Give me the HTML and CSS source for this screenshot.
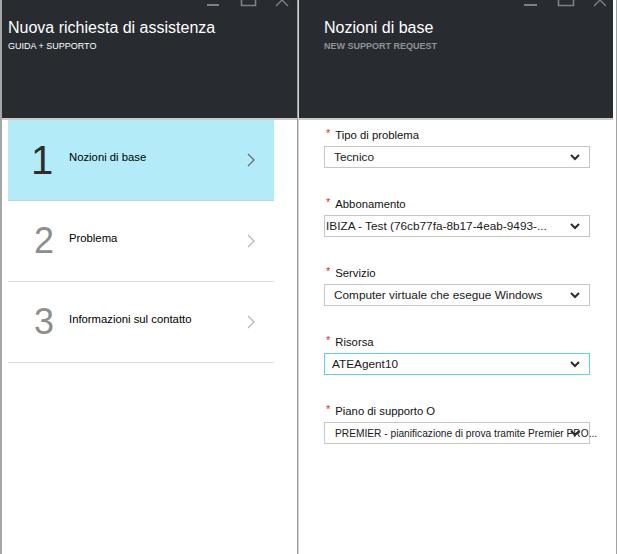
FILE: index.html
```html
<!DOCTYPE html>
<html lang="it">
<head>
<meta charset="utf-8">
<title>Nuova richiesta di assistenza</title>
<link rel="stylesheet" href="styles.css">
</head>
<body>
<div class="app">
  <section class="blade blade-left">
    <header class="blade-header">
      <svg class="win-controls" width="82" height="8" viewBox="0 0 82 8">
        <rect x="0" y="4" width="12" height="2" fill="#7d8187"/>
        <path d="M34.5 -10 V5.5 H48.5 V-10" fill="none" stroke="#7d8187" stroke-width="1.6"/>
        <path d="M69 -6 L81 6 M81 -6 L69 6" fill="none" stroke="#7d8187" stroke-width="1.4"/>
      </svg>
      <h1 class="blade-title">Nuova richiesta di assistenza</h1>
      <div class="blade-subtitle">GUIDA + SUPPORTO</div>
    </header>
    <ol class="steps">
      <li class="step active">
        <span class="step-num">1</span>
        <span class="step-label">Nozioni di base</span>
        <svg class="step-chevron" width="8" height="14" viewBox="0 0 8 14"><path d="M1 1 L7 7 L1 13" fill="none" stroke="#6a6d70" stroke-width="1.3"/></svg>
      </li>
      <li class="step">
        <span class="step-num">2</span>
        <span class="step-label">Problema</span>
        <svg class="step-chevron" width="8" height="14" viewBox="0 0 8 14"><path d="M1 1 L7 7 L1 13" fill="none" stroke="#b8b8b8" stroke-width="1.3"/></svg>
      </li>
      <li class="step">
        <span class="step-num">3</span>
        <span class="step-label">Informazioni sul contatto</span>
        <svg class="step-chevron" width="8" height="14" viewBox="0 0 8 14"><path d="M1 1 L7 7 L1 13" fill="none" stroke="#b8b8b8" stroke-width="1.3"/></svg>
      </li>
    </ol>
  </section>
  <section class="blade blade-right">
    <header class="blade-header">
      <svg class="win-controls" width="82" height="8" viewBox="0 0 82 8">
        <rect x="0" y="4" width="13" height="2" fill="#7d8187"/>
        <path d="M34.5 -10 V5.5 H49.5 V-10" fill="none" stroke="#7d8187" stroke-width="1.6"/>
        <path d="M70 -6 L82 6 M82 -6 L70 6" fill="none" stroke="#7d8187" stroke-width="1.4"/>
      </svg>
      <h1 class="blade-title">Nozioni di base</h1>
      <div class="blade-subtitle muted">NEW SUPPORT REQUEST</div>
    </header>
    <form class="form">
      <div class="field">
        <div class="field-label"><span class="req">*</span>Tipo di problema</div>
        <div class="select"><span class="select-value">Tecnico</span><svg class="select-chevron" width="10" height="7" viewBox="0 0 10 7"><path d="M1 1 L5 5 L9 1" fill="none" stroke="#2b2b2b" stroke-width="2"/></svg></div>
      </div>
      <div class="field">
        <div class="field-label"><span class="req">*</span>Abbonamento</div>
        <div class="select tight"><span class="select-value">IBIZA - Test (76cb77fa-8b17-4eab-9493-...</span><svg class="select-chevron" width="10" height="7" viewBox="0 0 10 7"><path d="M1 1 L5 5 L9 1" fill="none" stroke="#2b2b2b" stroke-width="2"/></svg></div>
      </div>
      <div class="field">
        <div class="field-label"><span class="req">*</span>Servizio</div>
        <div class="select"><span class="select-value">Computer virtuale che esegue Windows</span><svg class="select-chevron" width="10" height="7" viewBox="0 0 10 7"><path d="M1 1 L5 5 L9 1" fill="none" stroke="#2b2b2b" stroke-width="2"/></svg></div>
      </div>
      <div class="field">
        <div class="field-label"><span class="req">*</span>Risorsa</div>
        <div class="select focused"><span class="select-value">ATEAgent10</span><svg class="select-chevron" width="10" height="7" viewBox="0 0 10 7"><path d="M1 1 L5 5 L9 1" fill="none" stroke="#2b2b2b" stroke-width="2"/></svg></div>
      </div>
      <div class="field">
        <div class="field-label"><span class="req">*</span>Piano di supporto O</div>
        <div class="select small"><span class="select-value">PREMIER - pianificazione di prova tramite Premier PRO...</span><svg class="select-chevron" width="10" height="7" viewBox="0 0 10 7"><path d="M1 1 L5 5 L9 1" fill="none" stroke="#2b2b2b" stroke-width="2"/></svg></div>
      </div>
    </form>
  </section>
</div>
</body>
</html>
```
FILE: styles.css
```css
* { box-sizing: border-box; }
html, body { margin: 0; padding: 0; height: 100%; }
body {
  font-family: "Liberation Sans", Arial, sans-serif;
  background: #ffffff;
  color: #222;
  overflow: hidden;
}
.app {
  display: flex;
  width: 617px;
  height: 554px;
}
.blade {
  display: flex;
  flex-direction: column;
  background: #fff;
  min-width: 0;
}
.blade-left {
  width: 298px;
  flex-shrink: 0;
  border-left: 2px solid #a6a6a6;
  border-right: 1px solid #9a9a9a;
}
.blade-right {
  flex: 1;
  border-left: 1px solid #d4d4d4;
  border-right: 1px solid #a2a2a2;
}
.blade-header {
  position: relative;
  height: 120px;
  flex-shrink: 0;
  background: #282c31;
  border-bottom: 2px solid #cbcbcb;
  padding: 18px 0 0 6px;
  color: #fff;
}
.blade-right .blade-header {
  margin-right: 3px;
  padding-left: 25px;
}
.win-controls {
  position: absolute;
  top: 0;
  right: 8px;
}
.blade-right .win-controls { right: 7px; }
.blade-title {
  margin: 0;
  font-size: 16px;
  line-height: 20px;
  font-weight: normal;
  color: #fff;
}
.blade-subtitle {
  margin-top: 3px;
  font-size: 9px;
  line-height: 11px;
  color: #fff;
}
.blade-subtitle.muted {
  color: #8f9398;
  font-weight: bold;
}
.steps {
  list-style: none;
  margin: 0;
  padding: 0 23px 0 6px;
}
.step {
  display: flex;
  align-items: center;
  height: 81px;
  border-bottom: 1px solid #dcdcdc;
  padding: 0 19px 0 26px;
}
.step.active {
  background: #b4ebf8;
  border-bottom-color: #c8d0d3;
}
.step-num {
  width: 35px;
  font-size: 36px;
  line-height: 1;
  color: #8e8e8e;
}
.step.active .step-num {
  color: #2e2e2e;
  font-size: 40px;
  margin-left: -3px;
  width: 38px;
}
.step-label {
  flex: 1;
  font-size: 11.3px;
  color: #000;
  margin-bottom: 7px;
}
.step-chevron { flex-shrink: 0; }
.form {
  display: flex;
  flex-direction: column;
  gap: 28px;
  padding: 7px 0 0 25px;
}
.field {
  width: 266px;
}
.field-label {
  font-size: 11.3px;
  line-height: 16px;
  color: #111;
  padding-left: 2px;
  margin-bottom: 3px;
}
.req {
  color: #e3262a;
  font-size: 11px;
  margin-right: 5px;
  position: relative;
  top: -2px;
}
.select {
  display: flex;
  align-items: center;
  height: 22px;
  border: 1px solid #c6c6c6;
  padding: 0 9px 0 9px;
  font-size: 11.8px;
  color: #1a1a1a;
}
.select.tight { padding-left: 1px; }
.select.focused { border-color: #62cff0; padding-left: 7px; }
.select.small { font-size: 10.2px; padding-left: 10px; }
.select-value {
  flex: 1;
  min-width: 0;
  white-space: nowrap;
}
.select-chevron {
  flex-shrink: 0;
  position: relative;
}
```
